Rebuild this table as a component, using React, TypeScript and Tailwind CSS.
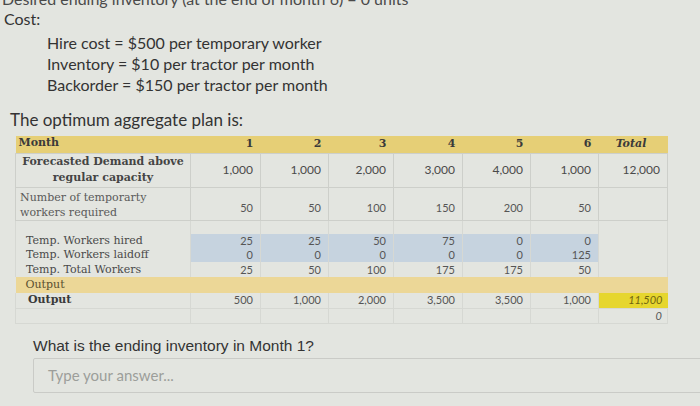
const serif = "font-['DejaVu_Serif','Liberation_Serif',serif]"
const lato = "font-['Lato','Open_Sans',sans-serif]"

const months = ['1', '2', '3', '4', '5', '6']
const colW = ['w-[175px]', 'w-[70px]', 'w-[68px]', 'w-[65px]', 'w-[69px]', 'w-[68px]', 'w-[68px]', 'w-[69px]']

const demand = ['1,000', '1,000', '2,000', '3,000', '4,000', '1,000', '12,000']
const required = ['50', '50', '100', '150', '200', '50', '']
const hired = ['25', '25', '50', '75', '0', '0']
const laidoff = ['0', '0', '0', '0', '0', '125']
const totalWorkers = ['25', '50', '100', '175', '175', '50']
const output = ['500', '1,000', '2,000', '3,500', '3,500', '1,000']

const cell = 'border border-[#cdcfca] text-right pr-[7px]'
const side = 'border-x border-[#d6d8d3]'

function LowerRow({ label, values, blue, h }: { label: string; values: string[]; blue?: boolean; h: string }) {
  return (
    <tr className={`${h} leading-[14px]`}>
      <td className={`${serif} ${side} pl-[10px] text-[11px] text-[#4a4a4a]`}>{label}</td>
      {values.map((v, i) => (
        <td key={i} className={`${side} text-right pr-[7px] ${blue ? 'bg-[#c6d3df]' : ''}`}>{v}</td>
      ))}
      <td className={side}></td>
    </tr>
  )
}

export default function App() {
  return (
    <div className={`w-[700px] h-[406px] overflow-hidden bg-[#e3e5e0] text-[#333] ${lato}`}>
      <div className='h-[9px] overflow-hidden'>
        <p className='-mt-[11px] pl-[2px] text-[16px] leading-[20px] text-[#4a4a4a]'>
          Desired ending inventory (at the end of month 6) = 0 units
        </p>
      </div>

      <p className='pl-[4px] text-[16px] leading-[20px]'>Cost:</p>
      <div className='pl-[47px] pt-[3px] text-[16px] leading-[21px]'>
        <p>Hire cost = $500 per temporary worker</p>
        <p>Inventory = $10 per tractor per month</p>
        <p>Backorder = $150 per tractor per month</p>
      </div>

      <p className='pl-[10px] pt-[15px] text-[17px] leading-[20px]'>The optimum aggregate plan is:</p>

      <table className={`ml-[15px] mt-[6px] border-collapse table-fixed text-[11px] text-[#555] ${lato}`}>
        <colgroup>
          {colW.map((w, i) => <col key={i} className={w} />)}
        </colgroup>
        <tbody>
          <tr className={`h-[17px] bg-[#e6cf76] ${serif} font-bold text-[11px] text-[#3a3a3a] leading-[14px]`}>
            <td className='pl-[3px] align-top'>Month</td>
            {months.map(m => <td key={m} className='text-right pr-[7px]'>{m}</td>)}
            <td className='text-center italic pr-[4px]'>Total</td>
          </tr>
          <tr className='h-[34px] text-[12px] text-[#4a4a4a]'>
            <td className={`${cell} text-center! pr-0! ${serif} font-bold text-[11px] leading-[16px] text-[#444]`}>
              Forecasted Demand above<br />regular capacity
            </td>
            {demand.map((v, i) => <td key={i} className={cell}>{v}</td>)}
          </tr>
          <tr className='h-[33px]'>
            <td className={`${cell} text-left! pl-[4px] align-top pt-[2px] ${serif} text-[11px] leading-[15px] text-[#5a5a5a]`}>
              Number of temporarty<br />workers required
            </td>
            {required.map((v, i) => <td key={i} className={`${cell} align-bottom pb-[3px]`}>{v}</td>)}
          </tr>
          <tr className='h-[14px]'>
            <td className={side}></td>
            {months.map(m => <td key={m} className={side}></td>)}
            <td className={side}></td>
          </tr>
          <LowerRow label='Temp. Workers hired' values={hired} blue h='h-[14px]' />
          <LowerRow label='Temp. Workers laidoff' values={laidoff} blue h='h-[14px]' />
          <LowerRow label='Temp. Total Workers' values={totalWorkers} h='h-[15px]' />
          <tr className='h-[16px] bg-[#ecd797]'>
            <td colSpan={8} className={`${serif} pl-[10px] text-[11px] leading-[14px] text-[#5a5030]`}>Output</td>
          </tr>
          <tr className='h-[15px] leading-[14px]'>
            <td className={`${serif} ${side} pl-[12px] font-bold text-[11px] text-[#3a3a3a]`}>Output</td>
            {output.map((v, i) => <td key={i} className={`${side} text-right pr-[7px]`}>{v}</td>)}
            <td className='bg-[#e6d62e] text-right pr-[5px] italic text-[#6f6410]'>11,500</td>
          </tr>
          <tr className='h-[15px] leading-[14px]'>
            <td className='border border-[#d6d8d3]'></td>
            {months.map(m => <td key={m} className='border border-[#d6d8d3]'></td>)}
            <td className='border border-[#d6d8d3] text-right pr-[5px] italic'>0</td>
          </tr>
        </tbody>
      </table>

      <p className="pl-[33px] pt-[13px] font-['Liberation_Sans',Arial,sans-serif] text-[15.5px] leading-[18px] text-[#333]">
        What is the ending inventory in Month 1?
      </p>
      <div className='ml-[33px] mt-[3px] w-[680px] h-[35px] border border-[#cacbc7] rounded-[2px] flex items-center pl-[14px] text-[15px] text-[#9c9e9a]'>
        Type your answer...
      </div>
    </div>
  )
}
